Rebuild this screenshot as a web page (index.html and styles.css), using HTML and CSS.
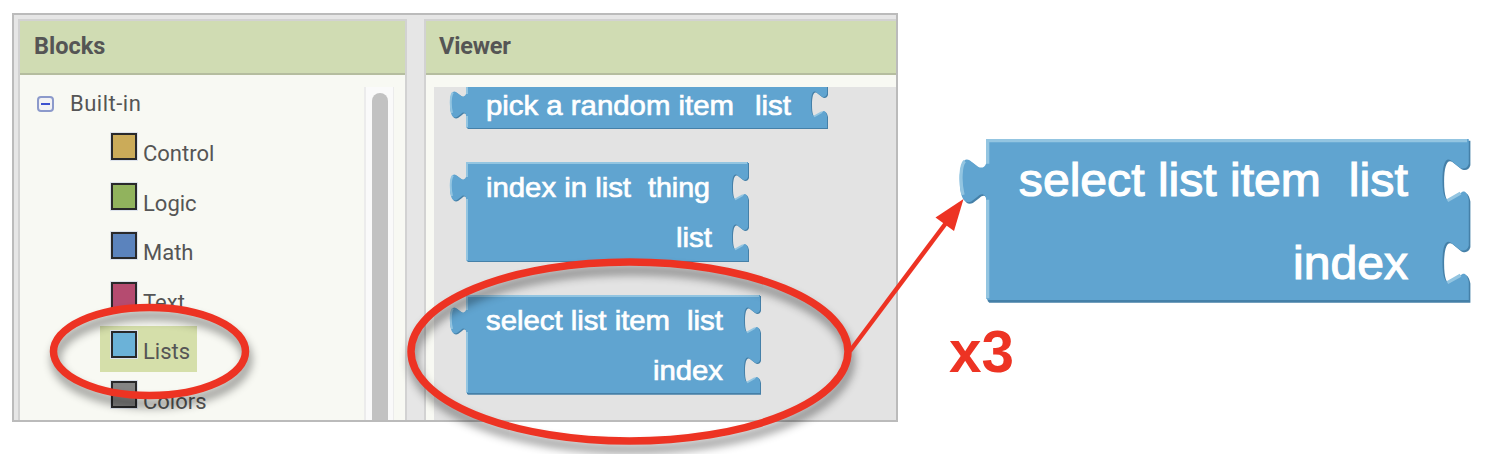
FILE: index.html
```html
<!DOCTYPE html>
<html lang="en">
<head>
<meta charset="utf-8">
<title>App Inventor list blocks</title>
<link rel="stylesheet" href="styles.css">
</head>
<body>
<main class="stage">
  <section class="editor">
    <div class="panel palette">
      <h2 class="panel-title">Blocks</h2>
      <div class="palette-body">
        <div class="tree">
          <div class="tree-root"><span class="toggle"></span>Built-in</div>
          <ul class="drawers">
            <li class="drawer"><span class="swatch control"></span><span class="label">Control</span></li>
            <li class="drawer"><span class="swatch logic"></span><span class="label">Logic</span></li>
            <li class="drawer"><span class="swatch math"></span><span class="label">Math</span></li>
            <li class="drawer"><span class="swatch text"></span><span class="label">Text</span></li>
            <li class="drawer selected"><span class="swatch lists"></span><span class="label">Lists</span></li>
            <li class="drawer"><span class="swatch colors"></span><span class="label">Colors</span></li>
          </ul>
        </div>
        <div class="scroll-track"><div class="scroll-thumb"></div></div>
      </div>
    </div>
    <div class="panel viewer">
      <h2 class="panel-title">Viewer</h2>
      <div class="workspace">
        <svg class="flyout" width="461" height="332" viewBox="434 87 461 332">
          <g transform="translate(466,62)">
            <path class="shade" transform="translate(1,1)" d="M0,1 H361 V32 C360,35.500 357,35.500 355,34 L350,30 C347,28 345,32 345,42 C345,54 348,56 351,53 L356,50 C358,48 360,49 361,54 V66 H1 L0,65 V53 C-1,50 -3,50 -5,52 L-9,55 C-13,57 -16,53 -16,42 C-16,31 -13,28 -10,30 L-6,33 C-4,35 -1,35 0,32 Z"/>
            <path class="face" d="M0,1 H361 V32 C360,35.500 357,35.500 355,34 L350,30 C347,28 345,32 345,42 C345,54 348,56 351,53 L356,50 C358,48 360,49 361,54 V66 H1 L0,65 V53 C-1,50 -3,50 -5,52 L-9,55 C-13,57 -16,53 -16,42 C-16,31 -13,28 -10,30 L-6,33 C-4,35 -1,35 0,32 Z"/>
            <path class="glint" d="M1,65 V54 M1,32 V1 M-14,51 C-16,43 -15.500,33 -13,30.500 M348,54.500 L356,50"/>
            <text class="block-text" x="20" y="53" textLength="248" lengthAdjust="spacingAndGlyphs">pick a random item</text>
            <text class="block-text" x="289" y="53" textLength="36" lengthAdjust="spacingAndGlyphs">list</text>
          </g>
          <g transform="translate(466,162)">
            <path class="shade" transform="translate(1,1)" d="M0,0 H282 V15 C281,18.500 278,18.500 276,17 L271,13 C268,11 266,15 266,25 C266,37 269,39 272,36 L277,33 C279,31 281,32 282,37 V65 C281,68.500 278,68.500 276,67 L271,63 C268,61 266,65 266,75 C266,87 269,89 272,86 L277,83 C279,81 281,82 282,87 V99 H1 L0,98 V36 C-1,33 -3,33 -5,35 L-9,38 C-13,40 -16,36 -16,25 C-16,14 -13,11 -10,13 L-6,16 C-4,18 -1,18 0,15 Z"/>
            <path class="face" d="M0,0 H282 V15 C281,18.500 278,18.500 276,17 L271,13 C268,11 266,15 266,25 C266,37 269,39 272,36 L277,33 C279,31 281,32 282,37 V65 C281,68.500 278,68.500 276,67 L271,63 C268,61 266,65 266,75 C266,87 269,89 272,86 L277,83 C279,81 281,82 282,87 V99 H1 L0,98 V36 C-1,33 -3,33 -5,35 L-9,38 C-13,40 -16,36 -16,25 C-16,14 -13,11 -10,13 L-6,16 C-4,18 -1,18 0,15 Z"/>
            <path class="glint" d="M1,98 V37 M1,15 V1 H281 M-14,34 C-16,26 -15.500,16 -13,13.500 M269,37.500 L277,33 M269,87.500 L277,83"/>
            <text class="block-text" x="20" y="35" textLength="145" lengthAdjust="spacingAndGlyphs">index in list</text>
            <text class="block-text" x="182" y="35" textLength="62" lengthAdjust="spacingAndGlyphs">thing</text>
            <text class="block-text" x="210" y="85" textLength="36" lengthAdjust="spacingAndGlyphs">list</text>
          </g>
          <g transform="translate(466,295)">
            <use href="#select-block"/>
          </g>
        </svg>
      </div>
    </div>
  </section>

  <svg class="annotations" width="1490" height="454" viewBox="0 0 1490 454">
    <defs>
      <g id="select-block">
        <path class="shade" transform="translate(1,1)" d="M0,0 H294 V15 C293,18.500 290,18.500 288,17 L283,13 C280,11 278,15 278,25 C278,37 281,39 284,36 L289,33 C291,31 293,32 294,37 V65 C293,68.500 290,68.500 288,67 L283,63 C280,61 278,65 278,75 C278,87 281,89 284,86 L289,83 C291,81 293,82 294,87 V98.700 H1 L0,97.700 V36 C-1,33 -3,33 -5,35 L-9,38 C-13,40 -16,36 -16,25 C-16,14 -13,11 -10,13 L-6,16 C-4,18 -1,18 0,15 Z"/>
        <path class="face" d="M0,0 H294 V15 C293,18.500 290,18.500 288,17 L283,13 C280,11 278,15 278,25 C278,37 281,39 284,36 L289,33 C291,31 293,32 294,37 V65 C293,68.500 290,68.500 288,67 L283,63 C280,61 278,65 278,75 C278,87 281,89 284,86 L289,83 C291,81 293,82 294,87 V98 H1 L0,97 V36 C-1,33 -3,33 -5,35 L-9,38 C-13,40 -16,36 -16,25 C-16,14 -13,11 -10,13 L-6,16 C-4,18 -1,18 0,15 Z"/>
        <path class="glint" d="M1,97 V37 M1,15 V1 H293 M-14,34 C-16,26 -15.500,16 -13,13.500 M281,37.500 L289,33 M281,87.500 L289,83"/>
        <text class="block-text" x="20" y="35" textLength="184" lengthAdjust="spacingAndGlyphs">select list item</text>
        <text class="block-text" x="221" y="35" textLength="36" lengthAdjust="spacingAndGlyphs">list</text>
        <text class="block-text" x="187" y="85" textLength="70" lengthAdjust="spacingAndGlyphs">index</text>
      </g>
    </defs>
    <g transform="translate(986,139) scale(1.642)">
      <use href="#select-block"/>
    </g>
    <ellipse class="ring" cx="149.500" cy="351.500" rx="96" ry="44"/>
    <ellipse class="ring" cx="629.500" cy="351.500" rx="218.500" ry="89.500"/>
    <path class="arrow-line" d="M850,351 L946,223"/>
    <path class="arrow-head" d="M963.500,199 L935.500,217.500 L954,231 Z"/>
    <text class="count" x="949" y="372" textLength="65" lengthAdjust="spacingAndGlyphs">x3</text>
  </svg>
</main>
</body>
</html>
```
FILE: styles.css
```css
body {
  margin: 0;
  background: #fff;
}

.stage {
  position: relative;
  box-sizing: border-box;
  width: 1490px;
  height: 454px;
  padding: 13px 0 0 12px;
  overflow: hidden;
}

.editor {
  display: flex;
  gap: 17px;
  box-sizing: border-box;
  width: 886px;
  height: 409px;
  padding: 4px 0 0 4px;
  border: 2px solid #bbb;
  background: #e6e6e6;
  font-family: Roboto, sans-serif;
  color: #555;
  overflow: hidden;
}

.panel {
  box-sizing: border-box;
  display: flex;
  flex-direction: column;
  background: #f8f9f3;
  border: 2px solid #d2d2d2;
  border-width: 2px 2px 0 2px;
}

.palette {
  flex: 0 0 389px;
}

.viewer {
  flex: 1;
  border-right-width: 0;
}

.panel-title {
  box-sizing: border-box;
  flex: 0 0 54px;
  margin: 0;
  padding-left: 14px;
  border-bottom: 2px solid #b5bd9f;
  background: #d0dcb3;
  font-size: 23.500px;
  line-height: 51px;
  font-weight: 700;
}

.viewer .panel-title {
  padding-left: 13px;
  letter-spacing: -0.200px;
}

.palette-body {
  display: flex;
  justify-content: space-between;
  flex: 1;
  min-height: 0;
  padding: 12px 11px 0 17px;
}

.tree {
  font-size: 22px;
}

.tree-root {
  display: flex;
  align-items: center;
  gap: 16px;
  height: 33px;
  margin-bottom: 8px;
  letter-spacing: 0.500px;
}

.toggle {
  box-sizing: border-box;
  display: flex;
  align-items: center;
  justify-content: center;
  width: 17px;
  height: 16px;
  border: 2px solid #8c9acb;
  border-radius: 4px;
  background: #f2f2f4;
}

.toggle::before {
  content: "";
  width: 9px;
  height: 2px;
  background: #3c50d0;
}

.drawers {
  display: grid;
  grid-auto-rows: 46px;
  gap: 3.600px;
  margin: 0 0 0 63px;
  padding: 0;
  list-style: none;
  justify-items: start;
}

.drawer {
  display: flex;
  gap: 6px;
  box-sizing: border-box;
  padding: 5px 7px 0 11px;
}

.selected {
  background: #d5dfaa;
}

.swatch {
  box-sizing: border-box;
  width: 26px;
  height: 27px;
  border: 2px solid #29292b;
  outline: 1px solid #dce2ec;
}

.label {
  padding-top: 8px;
  line-height: 25px;
}

.control { background: #cbab59; }
.logic { background: #91b35d; }
.math { background: #5b83bd; }
.text { background: #b54b70; }
.lists { background: #6bb2d8; }
.colors { background: #848484; }

.scroll-track {
  box-sizing: border-box;
  width: 30px;
  padding: 6px 5px 0 6px;
  border: 2px solid #ececec;
  border-width: 0 1px 0 2px;
  background: #fafafa;
}

.scroll-thumb {
  width: 16px;
  height: 340px;
  border-radius: 8px;
  background: #c2c2c2;
}

.workspace {
  margin: 12px 0 0 8px;
  height: 334px;
  background: #e3e3e3;
  overflow: hidden;
}

.flyout {
  display: block;
}

.annotations {
  position: absolute;
  top: 0;
  left: 0;
}

.block-text {
  fill: #fff;
  stroke: #fff;
  stroke-width: 0.700px;
  font: 28.500px "Liberation Sans", Arial, sans-serif;
}

.face { fill: #60a4d0; }
.shade { fill: #4580a8; }

.glint {
  fill: none;
  stroke: #93c5e1;
  stroke-width: 2px;
}

.ring {
  fill: none;
  stroke: #ed3323;
  stroke-width: 7.500px;
  filter: drop-shadow(2px 8px 5px rgba(0, 0, 0, 0.450));
}

.arrow-line {
  stroke: #ed3323;
  stroke-width: 4.500px;
}

.arrow-head,
.count {
  fill: #ed3323;
}

.count {
  font: bold 60px "Liberation Sans", Arial, sans-serif;
}
```
